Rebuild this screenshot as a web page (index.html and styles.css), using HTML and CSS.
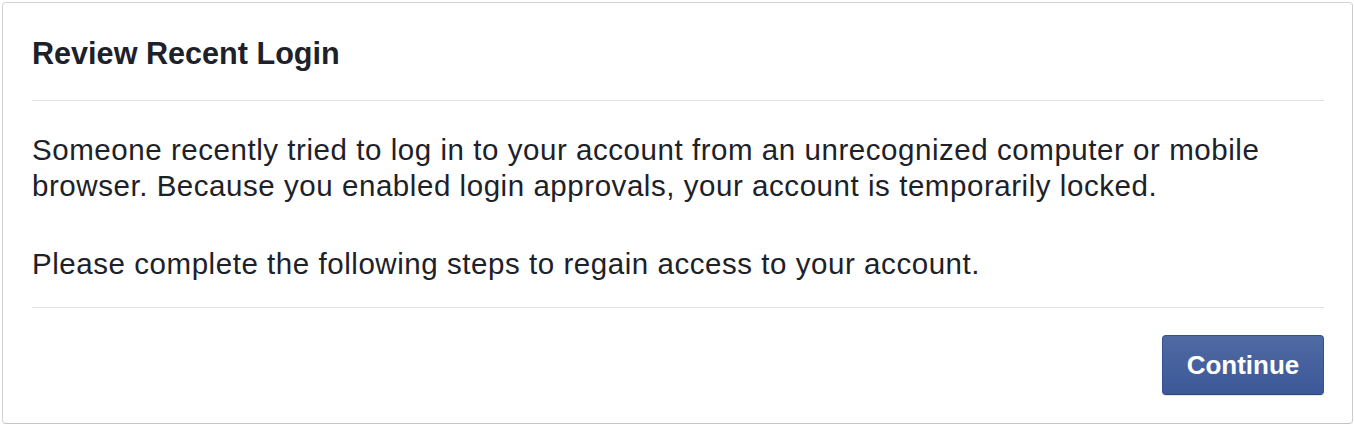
FILE: index.html
```html
<!DOCTYPE html>
<html>
<head>
<meta charset="utf-8">
<link rel="stylesheet" href="styles.css">
</head>
<body>
<div class="dialog">
  <div class="header">
    <h2 class="title">Review Recent Login</h2>
  </div>
  <div class="content">
    <p class="para">Someone recently tried to log in to your account from an unrecognized computer or mobile browser. Because you enabled login approvals, your account is temporarily locked.</p>
    <p class="para">Please complete the following steps to regain access to your account.</p>
  </div>
  <div class="footer">
    <button class="btn">Continue</button>
  </div>
</div>
</body>
</html>
```
FILE: styles.css
```css
html, body {
  margin: 0;
  padding: 0;
  background: #ffffff;
}
body {
  padding: 2px 1px 1px 2px;
  font-family: "Liberation Sans", Arial, Helvetica, sans-serif;
  color: #1d2129;
}
.dialog {
  box-sizing: border-box;
  height: 422px;
  border: 1px solid #d3d4d8;
  border-right-color: #cbcccf;
  border-bottom-color: #c4c5c9;
  border-radius: 4px;
  background: #fff;
  display: flex;
  flex-direction: column;
}
.header {
  margin: 0 28px 0 29px;
  height: 97px;
  border-bottom: 1px solid #dddfe2;
  display: flex;
  align-items: center;
}
.title {
  margin: 0;
  font-size: 30.6px;
  font-weight: bold;
  line-height: 36px;
  padding-top: 3px;
}
.content {
  margin: 0 28px 0 29px;
  height: 207px;
  border-bottom: 1px solid #dddfe2;
  padding-top: 31px;
  box-sizing: border-box;
}
.para {
  margin: 0 0 42px 0;
  font-size: 29.5px;
  letter-spacing: 0.55px;
  line-height: 36px;
}
.footer {
  flex: 1;
  display: flex;
  justify-content: flex-end;
  align-items: flex-start;
  padding: 27px 28px 0 0;
}
.btn {
  width: 162px;
  height: 60px;
  border: 1px solid #34508f;
  border-bottom-color: #2c4580;
  border-radius: 4px;
  background: linear-gradient(#4f6aa3, #3c5898);
  color: #fff;
  font-family: "Liberation Sans", Arial, Helvetica, sans-serif;
  font-weight: bold;
  font-size: 26px;
  padding: 0;
  box-shadow: 0 1px 1px rgba(0,0,0,0.1);
}
```
